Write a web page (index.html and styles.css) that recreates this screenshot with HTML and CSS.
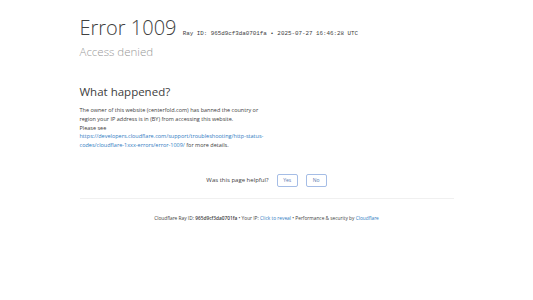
FILE: index.html
```html
<!DOCTYPE html>
<html lang="en">
<head>
  <meta charset="UTF-8">
  <meta name="viewport" content="width=device-width, initial-scale=1.0">
  <title>Access denied | centerfold.com used Cloudflare to restrict access</title>
  <link rel="stylesheet" href="styles.css">
</head>
<body>
  <div class="wrapper">
    <header class="error-head">
      <h1><span class="code">Error 1009</span> <span class="ray">Ray ID: 965d9cf3da0701fa &bull; 2025-07-27 16:46:28 UTC</span></h1>
      <h2 class="subtitle">Access denied</h2>
    </header>

    <section class="details">
      <div class="col">
        <h2>What happened?</h2>
        <p>The owner of this website (centerfold.com) has banned the country or region your IP address is in (BY) from accessing this website.<br>
          Please see <a href="#">https://developers.cloudflare.com/support/troubleshooting/http-status-codes/cloudflare-1xxx-errors/error-1009/</a> for more details.</p>
      </div>
      <div class="col"></div>
    </section>

    <div class="feedback">
      <span>Was this page helpful?</span>
      <button class="fb-btn">Yes</button>
      <button class="fb-btn">No</button>
    </div>

    <footer class="footer">
      <span>Cloudflare Ray ID: <strong>965d9cf3da0701fa</strong></span>
      <span class="sep">&bull;</span>
      <span>Your IP: <a href="#">Click to reveal</a></span>
      <span class="sep">&bull;</span>
      <span>Performance &amp; security by <a href="#">Cloudflare</a></span>
    </footer>
  </div>
</body>
</html>
```

FILE: styles.css
```css
body {
  margin: 0;
  font-family: "Open Sans", "Noto Sans", sans-serif;
  color: #404040;
  background: #fff;
}
.wrapper {
  width: 374px;
  margin: 0 auto;
  padding-top: 16px;
}
h1 {
  margin: 0;
  font-size: 20px;
  font-weight: 300;
  line-height: 24px;
  color: #404040;
}
.ray {
  font-family: "Liberation Mono", monospace;
  font-size: 5.85px;
  line-height: 1;
  margin-left: 1px;
  color: #404040;
}
.subtitle {
  margin: 5px 0 0;
  font-size: 11.5px;
  font-weight: 300;
  line-height: 14px;
  color: #999;
}
.details {
  display: flex;
  margin-top: 25.5px;
}
.col {
  width: 50%;
}
.col h2 {
  margin: 0 0 7.5px;
  font-size: 11.5px;
  font-weight: 400;
  line-height: 14px;
  color: #404040;
}
.col p {
  margin: 0;
  font-size: 5.5px;
  line-height: 8.75px;
}
a {
  color: #2f7bbf;
  text-decoration: none;
}
.feedback {
  display: flex;
  justify-content: center;
  align-items: center;
  gap: 8px;
  margin-top: 24px;
  font-size: 6px;
  padding-bottom: 11px;
  border-bottom: 1px solid #f0f0f0;
}
.fb-btn {
  font-family: inherit;
  font-size: 5px;
  height: 13px;
  width: 21px;
  padding: 0;
  background: #fff;
  color: #5a78b0;
  border: 1px solid #a5bde6;
  border-radius: 2px;
}
.footer {
  text-align: center;
  font-size: 4.8px;
  line-height: 8px;
  margin-top: 15px;
}
.footer strong {
  font-weight: 600;
}
```
